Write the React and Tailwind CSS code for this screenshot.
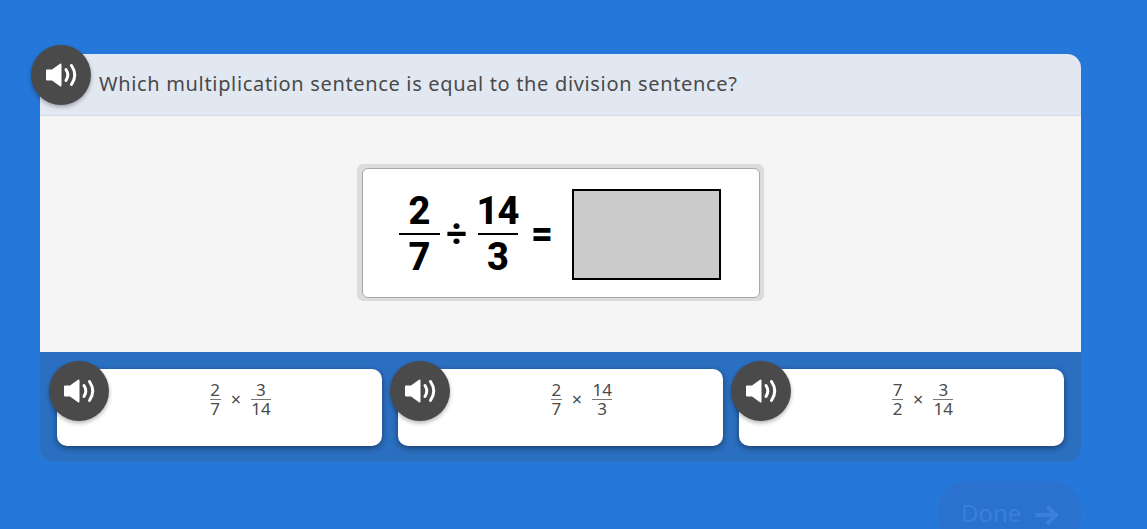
const Speaker = ({ className }) => (
  <div className={"absolute w-[60px] h-[60px] rounded-full bg-[#4a4a4a] flex items-center justify-center shadow-[0_2px_4px_rgba(0,0,0,0.3)] " + className}>
    <svg width="31" height="24" viewBox="0 0 31 24" fill="none">
      <path d="M1 6.5 H6 L14 0.8 Q15.5 0 15.5 1.8 V22.2 Q15.5 24 14 23.2 L6 17.5 H1 Q0 17.5 0 16.5 V7.5 Q0 6.5 1 6.5 Z" fill="#fff" />
      <path d="M20 6.5 Q23.6 12 20 17.5" stroke="#fff" strokeWidth="3" strokeLinecap="round" />
      <path d="M25.5 2.5 Q32 12 25.5 21.5" stroke="#fff" strokeWidth="3" strokeLinecap="round" />
    </svg>
  </div>
);

const Frac = ({ n, d, w }) => (
  <div className="flex flex-col items-center" style={{ width: w }}>
    <div className="leading-[13px] h-[13px] text-[17px]">{n}</div>
    <div className="w-full h-px bg-[#777] mt-[3px] mb-[1px]" />
    <div className="leading-[15px] h-[15px] text-[17px]">{d}</div>
  </div>
);

const Answer = ({ a, b, w1, w2 }) => (
  <div className="relative flex-1 h-[77px] bg-white rounded-[10px] shadow-[0_2px_6px_rgba(0,0,0,0.45)] flex justify-center pt-[12px] pl-[42px] font-['Noto_Sans',sans-serif] text-[#4a4a4a]">
    <div className="flex items-center h-[36px] gap-[10px]">
      <Frac n={a[0]} d={a[1]} w={w1} />
      <div className="text-[18px] leading-none">×</div>
      <Frac n={b[0]} d={b[1]} w={w2} />
    </div>
    <Speaker className="-left-[8px] -top-[8px]" />
  </div>
);

const BigFrac = ({ n, d, w }) => (
  <div className="flex flex-col items-center tracking-[-1px]" style={{ width: w }}>
    <div className="text-[38px] leading-[44px] h-[44px]">{n}</div>
    <div className="w-full h-[1.5px] bg-black" />
    <div className="text-[38px] leading-[44px] h-[44px]">{d}</div>
  </div>
);

export default function App() {
  return (
    <div className="h-[529px] overflow-hidden bg-[#2577d9] pt-[54px] pl-[40px] w-[1147px]">
      <div className="w-[1041px]">
        <div className="relative h-[62px] bg-[#e1e8f2] rounded-t-[14px] border-b border-[#d3dbe4] pl-[59px] pt-[15px] font-['Noto_Sans',sans-serif] text-[20px] leading-[30px] text-[#4a4a4a] tracking-[0.66px]">
          Which multiplication sentence is equal to the division sentence?
          <Speaker className="-left-[9px] -top-[9px]" />
        </div>
        <div className="h-[236px] bg-[#f5f5f5] flex justify-center pt-[48px]">
          <div className="w-[407px] h-[137px] ml-[-1px] bg-[#dcdcdc] rounded-[6px] pl-[5px] pr-[4px] pt-[4px]">
            <div className="h-[130px] bg-white border border-[#a8a8a8] rounded-[6px] flex items-center pl-[36px] pt-[2px] font-['Roboto',sans-serif] font-extrabold text-black">
              <BigFrac n="2" d="7" w="41px" />
              <div className="text-[36px] w-[34px] mr-[4px] text-center leading-none">÷</div>
              <BigFrac n="14" d="3" w="40px" />
              <div className="text-[38px] w-[49px] text-center leading-none">=</div>
              <div className="w-[149px] h-[91px] ml-[5px] bg-[#cbcbcb] border-2 border-black" />
            </div>
          </div>
        </div>
        <div className="h-[110px] bg-[#2b6fc1] rounded-b-[14px] flex gap-[16.5px] px-[17px] pt-[17px]">
          <Answer a={["2", "7"]} b={["3", "14"]} w1="11px" w2="20px" />
          <Answer a={["2", "7"]} b={["14", "3"]} w1="11px" w2="20px" />
          <Answer a={["7", "2"]} b={["3", "14"]} w1="11px" w2="20px" />
        </div>
        <div className="flex justify-end mt-[19px]">
          <div className="w-[143px] h-[64px] bg-[#2a72cd] rounded-[30px] flex items-start pt-[17px] pl-[23px] gap-[12px] text-[#3a80da] font-['Noto_Sans',sans-serif] text-[24px] leading-[30px]">
            Done
            <svg width="26" height="24" viewBox="0 0 26 24" fill="none" className="mt-[5px]">
              <path d="M2 12 H23 M14 3 L23 12 L14 21" stroke="#3a80da" strokeWidth="4" strokeLinejoin="miter" />
            </svg>
          </div>
        </div>
      </div>
    </div>
  );
}
